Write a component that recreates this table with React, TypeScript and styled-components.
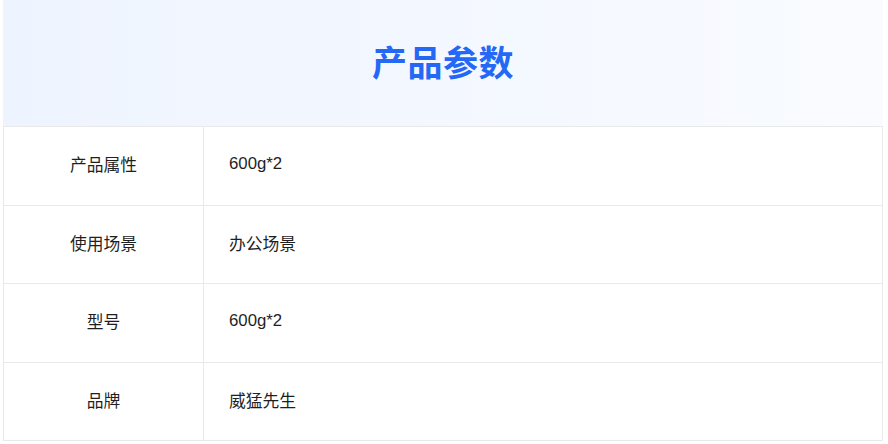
import styled, { createGlobalStyle } from "styled-components";

const GlobalStyle = createGlobalStyle`
  body {
    margin: 0;
    background: #ffffff;
    font-family: "Liberation Sans", "Noto Sans CJK SC", sans-serif;
  }
`;

const Page = styled.div`
  padding: 0 5px 0 3px;
`;

const Panel = styled.section`
  width: 880px;
`;

const Header = styled.div`
  height: 127px;
  display: flex;
  align-items: center;
  justify-content: center;
  background: linear-gradient(90deg, #eef4ff 0%, #f9fbff 100%);
  border-bottom: 1px solid #e9e9e9;
  box-sizing: border-box;
`;

const Title = styled.h1`
  margin: 0 0 6px;
  font-family: "Noto Sans CJK SC", sans-serif;
  font-size: 35px;
  font-weight: 700;
  color: #2468f5;
  letter-spacing: 0.5px;
`;

const Table = styled.div`
  border-left: 1px solid #e9e9e9;
  border-right: 1px solid #e9e9e9;
`;

const Row = styled.div`
  display: grid;
  grid-template-columns: 200px 1fr;
  height: 78.5px;
  box-sizing: border-box;
  border-bottom: 1px solid #e9e9e9;
  font-size: 16.8px;
  color: #1f1f1f;
`;

const Cell = styled.div<{ $label?: boolean }>`
  display: flex;
  align-items: center;
  justify-content: ${(p) => (p.$label ? "center" : "flex-start")};
  padding-left: ${(p) => (p.$label ? "0" : "25px")};
  padding-bottom: 3px;
  border-right: ${(p) => (p.$label ? "1px solid #e9e9e9" : "none")};
`;

const params = [
  { label: "产品属性", value: "600g*2" },
  { label: "使用场景", value: "办公场景" },
  { label: "型号", value: "600g*2" },
  { label: "品牌", value: "威猛先生" },
];

export default function App() {
  return (
    <Page>
      <GlobalStyle />
      <Panel>
        <Header>
          <Title>产品参数</Title>
        </Header>
        <Table>
          {params.map((p) => (
            <Row key={p.label}>
              <Cell $label>{p.label}</Cell>
              <Cell>{p.value}</Cell>
            </Row>
          ))}
        </Table>
      </Panel>
    </Page>
  );
}
